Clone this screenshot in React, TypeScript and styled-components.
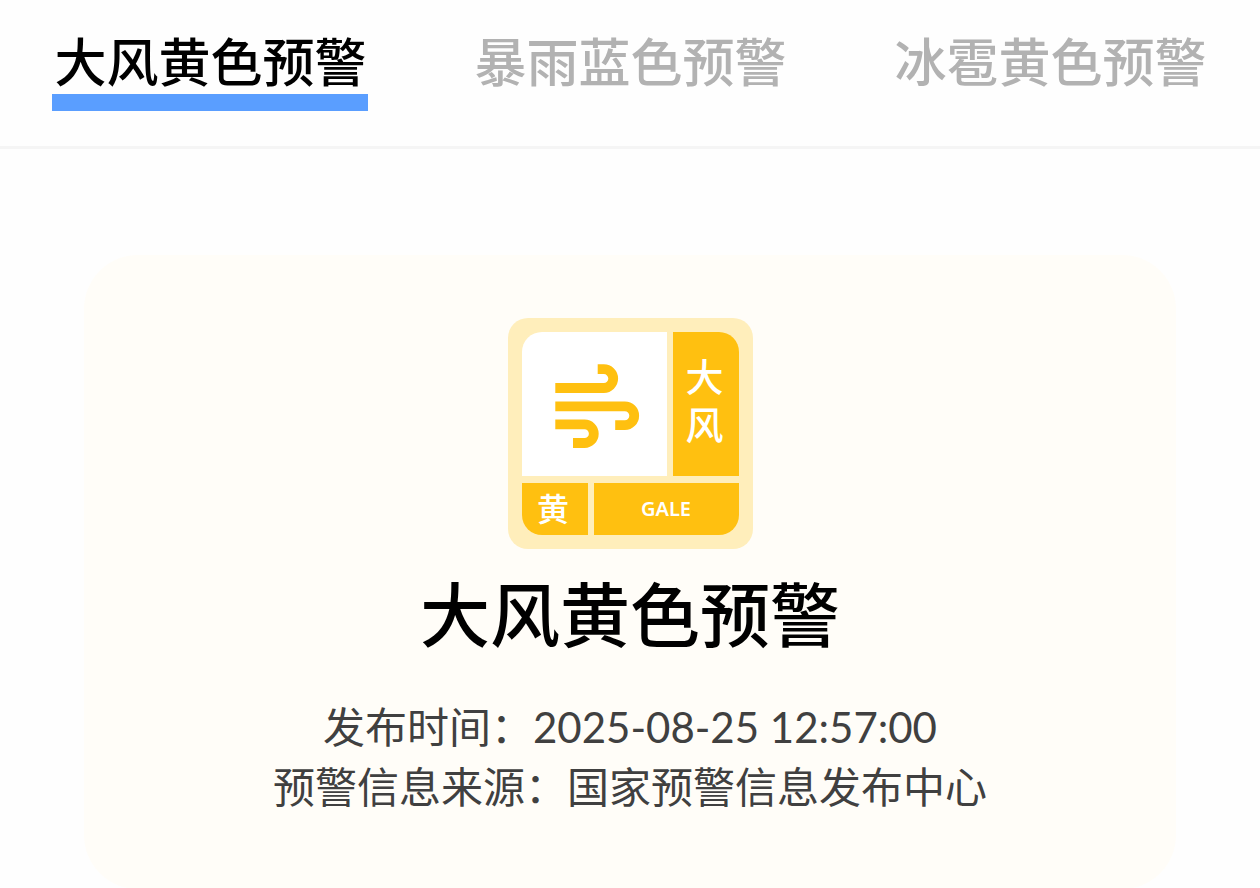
import React, { useState } from "react";
import styled, { createGlobalStyle } from "styled-components";

const GlobalStyle = createGlobalStyle`
  * { box-sizing: border-box; }
  body {
    margin: 0;
    background: #fefefe;
    color: #000;
    font-family: Lato, "Noto Sans CJK SC", sans-serif;
  }
`;

const Tabs = styled.nav`
  display: grid;
  grid-template-columns: repeat(3, 1fr);
  justify-items: center;
  padding: 30px 0 35px;
  border-bottom: 3px solid #f5f5f5;
`;

const Tab = styled.button<{ $active: boolean }>`
  display: flex;
  flex-direction: column;
  align-items: stretch;
  padding: 0;
  border: 0;
  background: none;
  font-family: inherit;
  font-size: 52px;
  font-weight: 500;
  line-height: 64px;
  white-space: nowrap;
  cursor: pointer;
  color: ${(p) => (p.$active ? "#000" : "#b2b2b2")};
  &::after {
    content: "";
    height: 17px;
    background: ${(p) => (p.$active ? "#5a9eff" : "transparent")};
  }
`;

const TabLabel = styled.span`
  padding: 0 1px 0 2px;
`;

const Main = styled.main`
  padding: 106px 84px 0;
`;

const Card = styled.section`
  display: flex;
  flex-direction: column;
  align-items: center;
  padding: 63px 40px 72px;
  border-radius: 54px;
  background: #fffdf8;
`;

const Badge = styled.div`
  display: grid;
  grid-template-columns: 66px 1fr 66px;
  grid-template-rows: 144px 52px;
  gap: 7px 6px;
  width: 245px;
  padding: 14px;
  border-radius: 20px;
  background: #ffeebb;
  color: #fff;
`;

const IconCell = styled.div`
  grid-column: 1 / 3;
  display: flex;
  border-radius: 20px 0 0 0;
  background: #fff;
`;

const NameCell = styled.div`
  display: flex;
  flex-direction: column;
  align-items: center;
  padding: 20px 2px 0 0;
  border-radius: 0 20px 0 0;
  background: #ffc010;
  font-size: 38px;
  font-weight: 500;
  line-height: 48px;
`;

const LevelCell = styled.div`
  display: flex;
  align-items: center;
  justify-content: center;
  padding-right: 3px;
  border-radius: 0 0 0 20px;
  background: #ffc010;
  font-size: 32px;
  font-weight: 500;
  line-height: 48px;
`;

const EnglishCell = styled.div`
  grid-column: 2 / 4;
  display: flex;
  align-items: center;
  justify-content: center;
  padding-bottom: 2px;
  border-radius: 0 0 20px 0;
  background: #ffc010;
  font-family: "Noto Sans", sans-serif;
  font-size: 20px;
  font-weight: 600;
`;

const Title = styled.h1`
  margin: 20px 0 0;
  font-size: 70px;
  font-weight: 500;
  line-height: 92px;
`;

const Details = styled.div`
  margin-top: 36px;
  color: #404040;
  font-size: 42px;
  line-height: 60px;
  text-align: center;
`;

const Line = styled.p`
  margin: 0;
`;

const WindIcon = () => (
  <svg width="145" height="144" viewBox="0 0 145 144" fill="none" stroke="#ffc010" strokeWidth="9.8" aria-hidden="true">
    <path d="M33.300 56H81.800A9.400 9.400 0 0 0 81.800 37.200H75.700" />
    <path d="M33.300 74.300H102.800A9.400 9.400 0 0 1 102.800 93.100H93.200" />
    <path d="M33.300 92.400H62.500A9.300 9.300 0 0 1 62.500 111H51" />
  </svg>
);

const alerts = ["大风黄色预警", "暴雨蓝色预警", "冰雹黄色预警"];

export default function App() {
  const [active, setActive] = useState(0);
  return (
    <>
      <GlobalStyle />
      <Tabs>
        {alerts.map((name, i) => (
          <Tab key={name} type="button" $active={i === active} onClick={() => setActive(i)}>
            <TabLabel>{name}</TabLabel>
          </Tab>
        ))}
      </Tabs>
      <Main>
        <Card>
          <Badge>
            <IconCell><WindIcon /></IconCell>
            <NameCell><span>大</span><span>风</span></NameCell>
            <LevelCell>黄</LevelCell>
            <EnglishCell>GALE</EnglishCell>
          </Badge>
          <Title>大风黄色预警</Title>
          <Details>
            <Line>发布时间：2025-08-25 12:57:00</Line>
            <Line>预警信息来源：国家预警信息发布中心</Line>
          </Details>
        </Card>
      </Main>
    </>
  );
}
